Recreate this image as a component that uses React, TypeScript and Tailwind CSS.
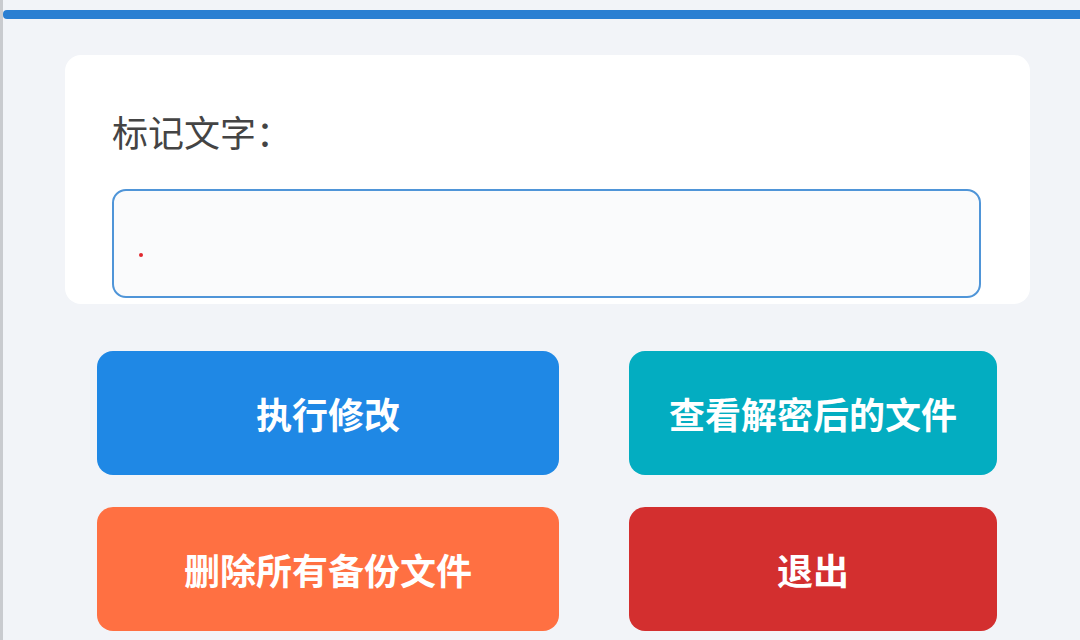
import React from "react";

const font = { fontFamily: '"Noto Sans CJK SC", "Noto Sans", sans-serif' };

export default function App() {
  const btn =
    "flex items-center justify-center rounded-[16px] text-white font-bold text-[36px] h-[124px]";
  return (
    <div
      className="w-[1080px] h-[640px] overflow-hidden bg-[#f2f4f8] border-l-[3px] border-[#c9cbcf]"
      style={font}
    >
      <div className="pt-[10px]">
        <div className="h-[9px] bg-[#2a7fd2] rounded-l-[4px]" />
      </div>
      <div className="ml-[62px] mt-[36px] w-[965px] bg-white rounded-[16px] pl-[47px] pr-[49px] pt-[56px] pb-[6px]">
        <div className="text-[36px] leading-[40px] text-[#444444]">标记文字：</div>
        <div className="mt-[38px] h-[109px] rounded-[14px] border-2 border-[#4f95d8] bg-[#fafbfc] pl-[25px] pt-[62px]">
          <span className="block w-[4px] h-[4px] rounded-full bg-[#e0282e]" />
        </div>
      </div>
      <div className="ml-[94px] mt-[47px] grid grid-cols-[462px_368px] gap-x-[70px] gap-y-[32px]">
        <div className={`${btn} bg-[#1f88e5]`}>执行修改</div>
        <div className={`${btn} bg-[#03adc1]`}>查看解密后的文件</div>
        <div className={`${btn} bg-[#ff7042]`}>删除所有备份文件</div>
        <div className={`${btn} bg-[#d32f2f]`}>退出</div>
      </div>
    </div>
  );
}
